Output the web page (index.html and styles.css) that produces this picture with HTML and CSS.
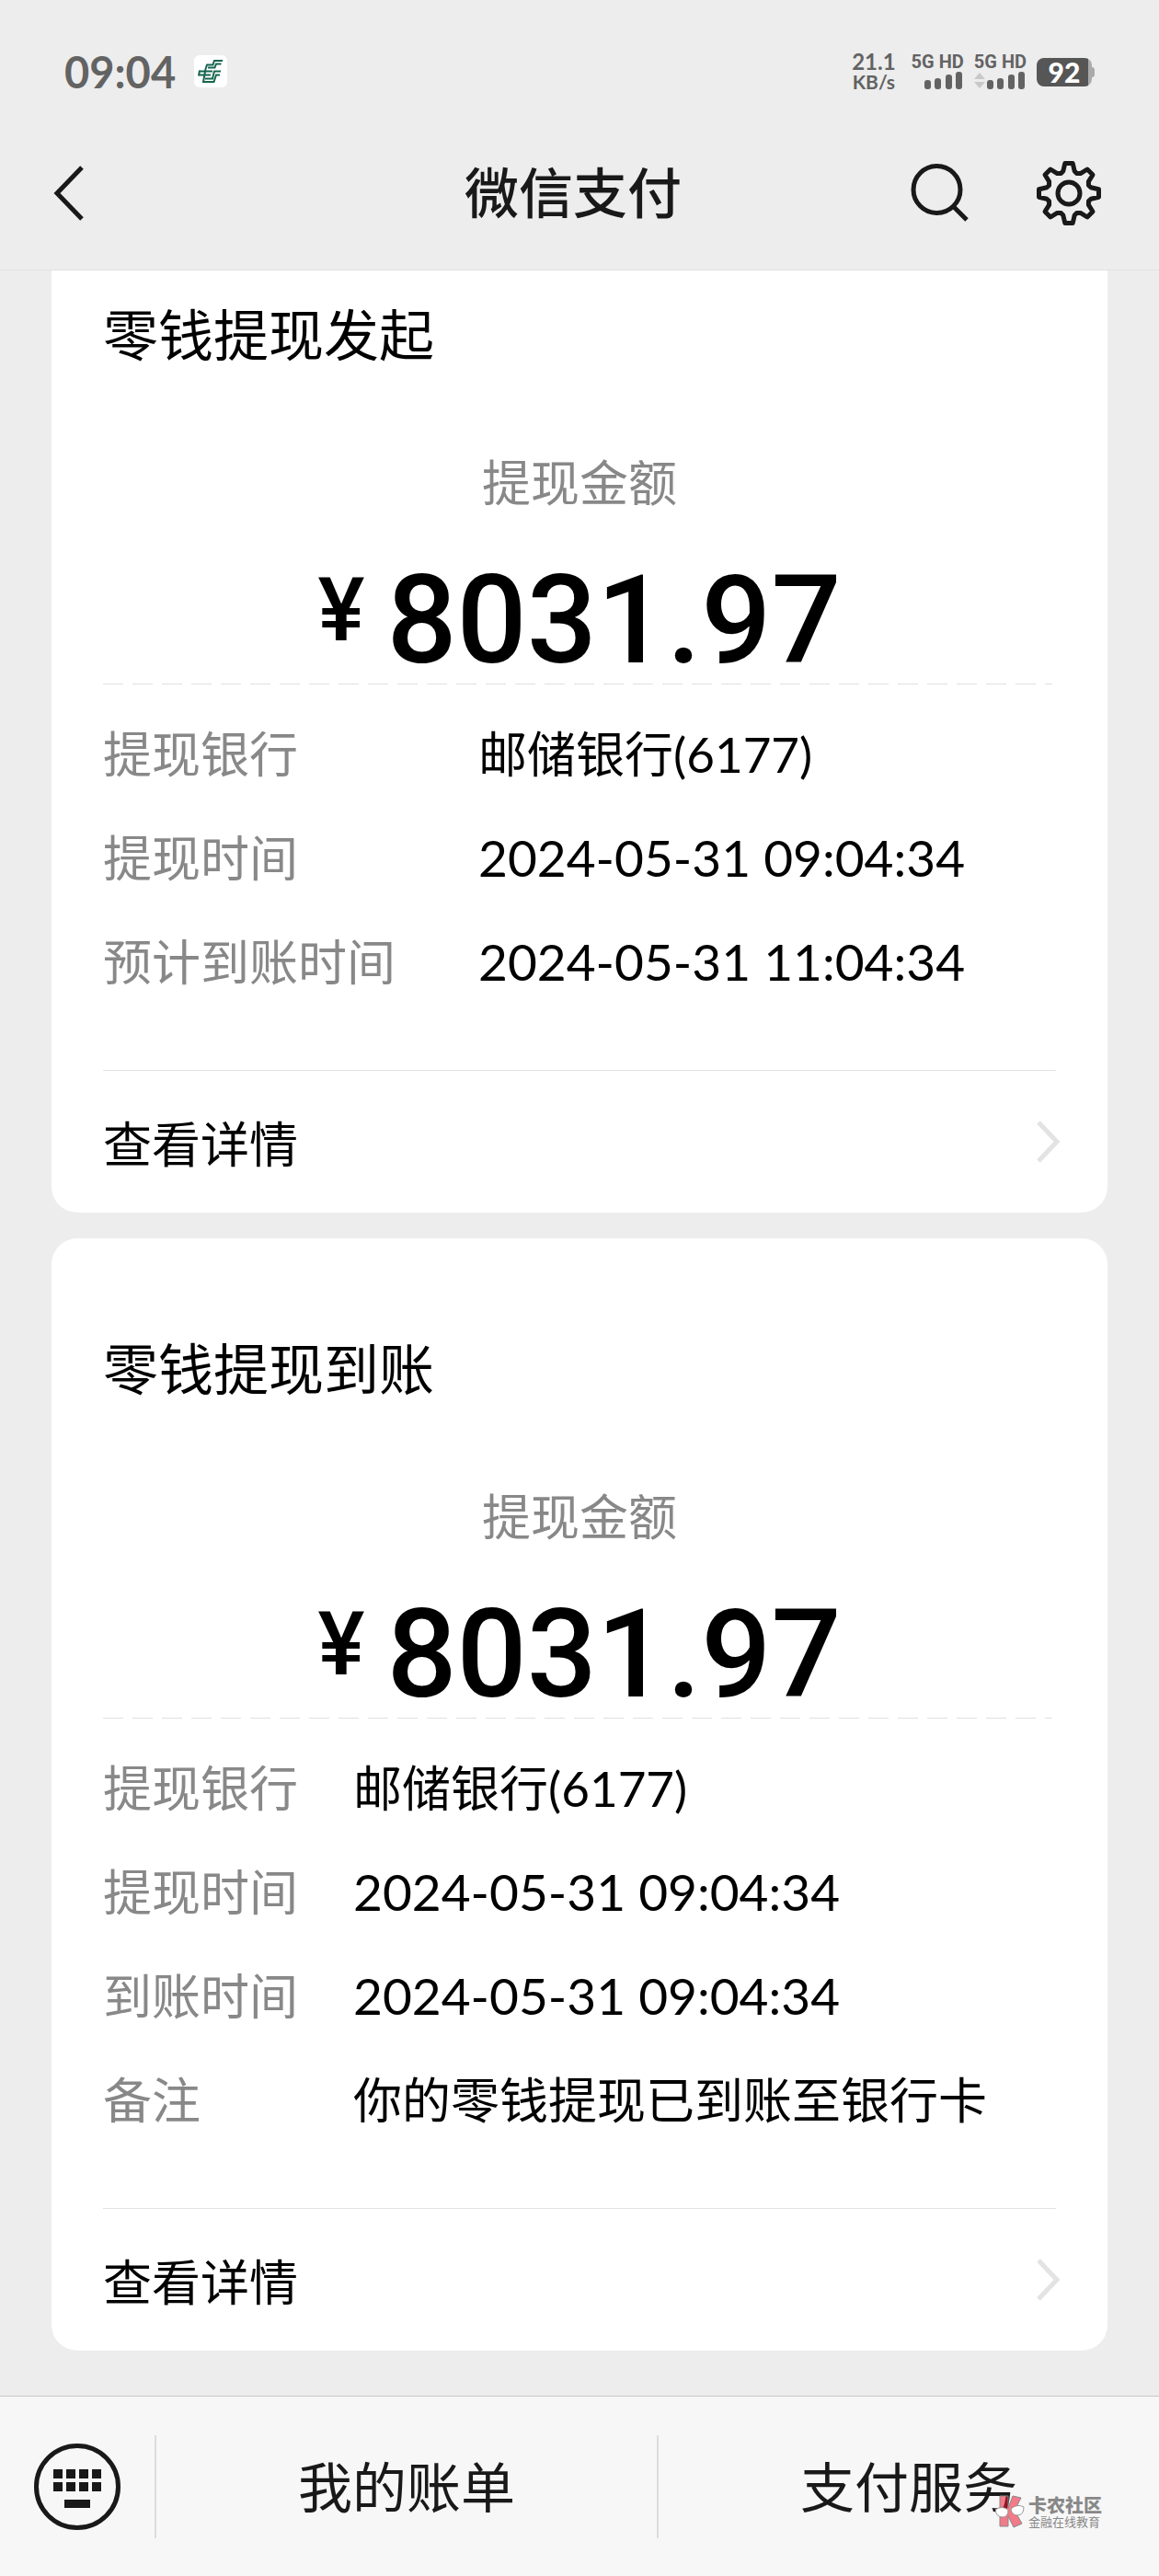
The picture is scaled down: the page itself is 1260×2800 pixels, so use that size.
FILE: index.html
```html
<!DOCTYPE html>
<html lang="zh-CN">
<head>
  <meta charset="UTF-8">
  <meta name="viewport" content="width=device-width, initial-scale=1.0">
  <title>微信支付</title>
  <link rel="stylesheet" href="styles.css">
</head>
<body>
  <div class="status-bar">
    <span class="time">09:04</span>
    <svg class="app-icon" width="36" height="36" viewBox="0 0 36 36">
      <rect width="36" height="35" rx="6" fill="#fff"/>
      <g fill="none" stroke="#17654e" stroke-width="2">
        <path d="M31 6H22L20.500 10.500H14L12.500 15"/>
        <path d="M29.500 9.500H24L22.500 13.500H15"/>
        <path d="M6 17.500H20M5 21.500H18M6 16.500L5 22.500M29 17.500H22L20 25.500H12"/>
        <path d="M28 21.500H24L21.500 29H10L12.500 15"/>
      </g>
    </svg>
    <div class="status-right">
      <div class="speed">
        <span class="speed-num">21.1</span>
        <span class="speed-unit">KB/s</span>
      </div>
      <div class="signal">
        <span>5G HD</span>
        <svg width="56" height="20" viewBox="0 0 56 20" fill="#636363">
          <rect x="14" y="9" width="7" height="10" rx="3"/>
          <rect x="25" y="7" width="7" height="12" rx="3"/>
          <rect x="37" y="3" width="7" height="16" rx="3"/>
          <rect x="48" y="0" width="7" height="19" rx="3"/>
        </svg>
      </div>
      <div class="signal">
        <span>5G HD</span>
        <svg width="56" height="20" viewBox="0 0 56 20" fill="#636363">
          <path d="M0 8L6 1L12 8ZM0 11H12L6 18Z" fill="#c8c8c8"/>
          <rect x="14" y="9" width="7" height="10" rx="3"/>
          <rect x="25" y="7" width="7" height="12" rx="3"/>
          <rect x="37" y="3" width="7" height="16" rx="3"/>
          <rect x="48" y="0" width="7" height="19" rx="3"/>
        </svg>
      </div>
      <div class="battery"><span>92</span></div>
    </div>
  </div>

  <header class="header">
    <div class="header-side">
      <button type="button" class="icon-btn" aria-label="返回">
        <svg width="48" height="64" viewBox="0 0 48 64" fill="none" stroke="#191919" stroke-width="5">
          <path d="M41 4L14 32L41 60"/>
        </svg>
      </button>
    </div>
    <h1>微信支付</h1>
    <div class="header-side header-right">
      <button type="button" class="icon-btn" aria-label="搜索">
        <svg width="64" height="64" viewBox="0 0 64 64" fill="none" stroke="#191919" stroke-width="5">
          <circle cx="28.500" cy="28" r="25.500"/>
          <path d="M46 46L61 61"/>
        </svg>
      </button>
      <button type="button" class="icon-btn" aria-label="设置">
        <svg width="72" height="72" viewBox="-36 -36 72 72" fill="none" stroke="#191919" stroke-width="5" stroke-linejoin="round">
          <path d="M-6.200 -24L-4.200 -32.500H4.200L6.200 -24L8.600 -21.500L12.600 -21.400L20 -26L26 -20L21.400 -12.600L21.500 -8.600L24 -6.200L32.500 -4.200V4.200L24 6.200L21.500 8.600L21.400 12.600L26 20L20 26L12.600 21.400L8.600 21.500L6.200 24L4.200 32.500H-4.200L-6.200 24L-8.600 21.500L-12.600 21.400L-20 26L-26 20L-21.400 12.600L-21.500 8.600L-24 6.200L-32.500 4.200V-4.200L-24 -6.200L-21.500 -8.600L-21.400 -12.600L-26 -20L-20 -26L-12.600 -21.400L-8.600 -21.500Z"/>
          <circle r="12"/>
        </svg>
      </button>
    </div>
  </header>

  <!-- newest message sits at the bottom, older ones slide under the header -->
  <main class="chat">
    <section class="card">
      <h2>零钱提现发起</h2>
      <p class="amount-label">提现金额</p>
      <p class="amount"><span class="yen">¥</span><span>8031.97</span></p>
      <dl class="details details-wide">
        <dt>提现银行</dt><dd>邮储银行(6177)</dd>
        <dt>提现时间</dt><dd class="date">2024-05-31 09:04:34</dd>
        <dt>预计到账时间</dt><dd class="date">2024-05-31 11:04:34</dd>
      </dl>
      <a href="#" class="more">
        <span>查看详情</span>
        <svg width="28" height="48" viewBox="0 0 28 48" fill="none" stroke="#e3e3e3" stroke-width="5">
          <path d="M3 3L23 24L3 45"/>
        </svg>
      </a>
    </section>

    <section class="card">
      <h2>零钱提现到账</h2>
      <p class="amount-label">提现金额</p>
      <p class="amount"><span class="yen">¥</span><span>8031.97</span></p>
      <dl class="details">
        <dt>提现银行</dt><dd>邮储银行(6177)</dd>
        <dt>提现时间</dt><dd class="date">2024-05-31 09:04:34</dd>
        <dt>到账时间</dt><dd class="date">2024-05-31 09:04:34</dd>
        <dt>备注</dt><dd>你的零钱提现已到账至银行卡</dd>
      </dl>
      <a href="#" class="more">
        <span>查看详情</span>
        <svg width="28" height="48" viewBox="0 0 28 48" fill="none" stroke="#e3e3e3" stroke-width="5">
          <path d="M3 3L23 24L3 45"/>
        </svg>
      </a>
    </section>
  </main>

  <footer class="menu-bar">
    <button type="button" class="keyboard-btn" aria-label="键盘">
      <svg width="96" height="96" viewBox="0 0 96 96" fill="#191919">
        <circle cx="48" cy="48" r="44.500" fill="none" stroke="#191919" stroke-width="5"/>
        <path d="M22 29h10v10h-10zM36 29h10v10h-10zM50 29h10v10h-10zM64 29h10v10h-10z"/>
        <path d="M22 43h10v10h-10zM36 43h10v10h-10zM50 43h10v10h-10zM64 43h10v10h-10z"/>
        <path d="M34 62h28v9h-28z"/>
      </svg>
    </button>
    <button type="button" class="menu-item">我的账单</button>
    <button type="button" class="menu-item">支付服务</button>
    <div class="watermark">
      <svg width="32" height="36" viewBox="0 0 32 36">
        <path d="M5 1H14V14L19 1L28 3L21 17L29 31L20 35L14 23V34H5Z" fill="#f0142d" fill-opacity="0.550" stroke="#888"/>
        <path d="M0 16Q7 11 14 16Q14 24 8 24Q1 24 0 16Z" fill="#fff" stroke="#999"/>
        <path d="M17 15Q24 9 31 13Q31 22 24 22Q18 22 17 15Z" fill="#fff" stroke="#999"/>
      </svg>
      <div class="watermark-text">
        <strong>卡农社区</strong>
        <span>金融在线教育</span>
      </div>
    </div>
  </footer>
</body>
</html>
```
FILE: styles.css
```css
* {
  box-sizing: border-box;
  margin: 0;
  padding: 0;
}

body {
  height: 100vh;
  display: flex;
  flex-direction: column;
  background-color: #ededed;
  color: #000;
  font-family: Lato, "Noto Sans CJK SC", sans-serif;
}

button {
  background: none;
  border: none;
  font-family: inherit;
  color: inherit;
  cursor: pointer;
}

svg {
  display: block;
}

/* status bar */
.status-bar {
  display: flex;
  align-items: center;
  height: 156px;
  padding: 0 73px 0 70px;
  color: #636363;
}

.time {
  font-size: 47px;
  font-weight: 700;
}

.app-icon {
  margin-left: 20px;
}

.status-right {
  display: flex;
  align-items: center;
  gap: 11px;
  margin-left: auto;
}

.speed {
  display: flex;
  flex-direction: column;
  align-items: center;
  margin-right: 6px;
  font-weight: 700;
}

.speed-num {
  font-size: 24px;
  line-height: 22px;
}

.speed-unit {
  font-size: 21px;
  line-height: 22px;
}

.signal {
  display: flex;
  flex-direction: column;
  gap: 2px;
  font-family: Roboto, sans-serif;
  font-size: 20px;
  font-weight: 700;
  line-height: 18px;
}

.battery {
  position: relative;
  width: 60px;
  height: 31px;
  border-radius: 8px;
  background: linear-gradient(to right, #565656 56px, #aaa 56px);
  color: #fff;
  font-size: 30px;
  font-weight: 900;
  line-height: 31px;
  text-align: center;
}

.battery::after {
  content: "";
  position: absolute;
  right: -3px;
  top: 10px;
  width: 3px;
  height: 11px;
  border-radius: 0 3px 3px 0;
  background-color: #aaa;
}

/* title bar */
.header {
  display: flex;
  align-items: center;
  height: 138px;
  padding: 0 62px 30px 48px;
  border-bottom: 1px solid #e2e2e2;
  color: #191919;
}

.header h1 {
  font-size: 59px;
  font-weight: 500;
  line-height: 80px;
}

.header-side {
  flex: 1;
  display: flex;
  align-items: center;
}

.header-right {
  justify-content: flex-end;
  gap: 72px;
}

/* messages */
.chat {
  flex: 1;
  min-height: 0;
  display: flex;
  flex-direction: column;
  justify-content: flex-end;
  gap: 28px;
  padding: 0 56px 49px;
  overflow: hidden;
}

.card {
  flex-shrink: 0;
  padding: 100px 56px 0;
  border-radius: 28px;
  background-color: #fff;
}

.card h2 {
  font-size: 60px;
  font-weight: 400;
  line-height: 84px;
}

.amount-label {
  margin-top: 82px;
  color: #888;
  font-size: 53px;
  line-height: 73px;
  text-align: center;
}

.amount {
  display: flex;
  justify-content: center;
  gap: 24px;
  margin-top: 54px;
  padding-bottom: 8px;
  font-family: Roboto, sans-serif;
  font-size: 134px;
  font-weight: 500;
  line-height: 120px;
}

.yen {
  font-size: 96px;
  line-height: 96px;
}

.details {
  display: grid;
  grid-template-columns: 272px 1fr;
  row-gap: 40px;
  padding: 40px 0 81px;
  background: repeating-linear-gradient(to right, #e0e0e0 0 22px, #fff 22px 32px) top left / calc(100% - 4px) 1px no-repeat;
  font-size: 53px;
  line-height: 73px;
}

.details-wide {
  grid-template-columns: 408px 1fr;
}

.details dt {
  color: #888;
}

.details .date {
  font-size: 55px;
}

.more {
  display: flex;
  align-items: center;
  justify-content: space-between;
  height: 155px;
  margin-right: -6px;
  background: linear-gradient(#e2e2e2, #e2e2e2) top left / calc(100% - 6px) 1px no-repeat;
  color: #000;
  font-size: 53px;
  text-decoration: none;
}

/* bottom menu */
.menu-bar {
  position: relative;
  display: flex;
  align-items: center;
  height: 196px;
  border-top: 1px solid #c9c9c9;
  background-color: #f7f7f7;
  color: #191919;
}

.keyboard-btn {
  padding: 0 36px;
}

.menu-item {
  flex: 1;
  height: 112px;
  padding-bottom: 4px;
  border-left: 2px solid #dcdcdc;
  font-size: 59px;
}

.watermark {
  position: absolute;
  right: 62px;
  bottom: 52px;
  display: flex;
  align-items: center;
  gap: 4px;
  color: #888;
}

.watermark-text {
  display: flex;
  flex-direction: column;
}

.watermark-text strong {
  font-size: 20px;
  font-weight: 900;
  line-height: 22px;
}

.watermark-text span {
  font-size: 13px;
  line-height: 14px;
}
```
